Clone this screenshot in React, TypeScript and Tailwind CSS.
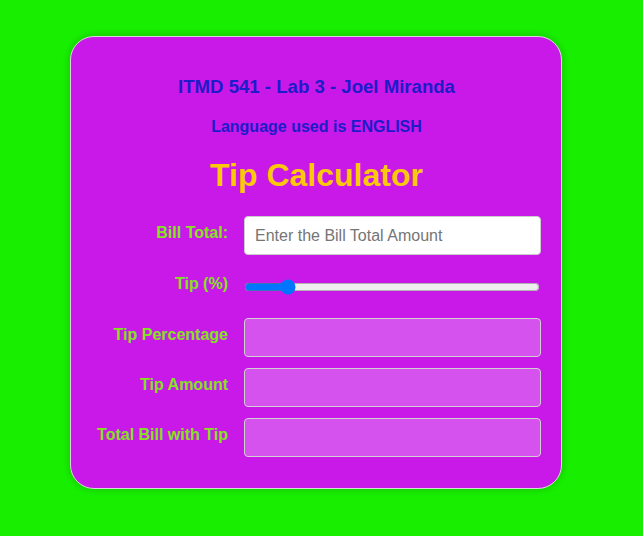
import { useState } from 'react';

const labelCls =
  'w-[137px] shrink-0 pt-[8px] text-right text-[16px] leading-[18px] font-bold text-[#84e41e]';

function OutputRow({ label }: { label: string }) {
  return (
    <div className="flex items-start gap-4">
      <label className={labelCls}>{label}</label>
      <div className="h-[39px] w-[297px] rounded border border-[#d0d0d0] bg-white/25" />
    </div>
  );
}

export default function App() {
  const [tip, setTip] = useState(13);

  return (
    <div className="min-h-[536px] bg-[#18ef00] pt-[36px] pl-[70px] font-['Liberation_Sans',Arial,sans-serif]">
      <div className="w-[492px] rounded-[24px] border border-[#d8d8d8] bg-[#c819e8] pl-[20px] pr-[19px] pt-[39px] pb-[31px] shadow-[0_0_8px_rgba(0,0,0,0.2)]">
        <h2 className="text-center text-[18.6px] leading-[21px] font-bold text-[#1c1cc8]">
          ITMD 541 - Lab 3 - Joel Miranda
        </h2>
        <p className="mt-[21px] text-center text-[16px] leading-[18px] font-bold text-[#1c1cc8]">
          Language used is ENGLISH
        </p>
        <h1 className="mt-[21px] text-center text-[32px] leading-[37px] font-bold text-[#fcc80a]">
          Tip Calculator
        </h1>

        <div className="mt-[22px] flex flex-col">
          <div className="flex items-start gap-4">
            <label className={labelCls}>Bill Total:</label>
            <input
              type="text"
              placeholder="Enter the Bill Total Amount"
              className="h-[39px] w-[297px] rounded border border-[#cccccc] bg-white px-[10px] text-[16px] text-black outline-none placeholder:text-[#757575]"
            />
          </div>

          <div className="mt-[12px] flex h-[39px] items-start gap-4">
            <label className={labelCls}>Tip (%)</label>
            <input
              type="range"
              min={0}
              max={100}
              value={tip}
              onChange={(e) => setTip(Number(e.target.value))}
              className="m-0 mt-[12px] w-[296px]"
            />
          </div>

          <div className="mt-[12px] flex flex-col gap-[11px]">
            <OutputRow label="Tip Percentage" />
            <OutputRow label="Tip Amount" />
            <OutputRow label="Total Bill with Tip" />
          </div>
        </div>
      </div>
    </div>
  );
}
